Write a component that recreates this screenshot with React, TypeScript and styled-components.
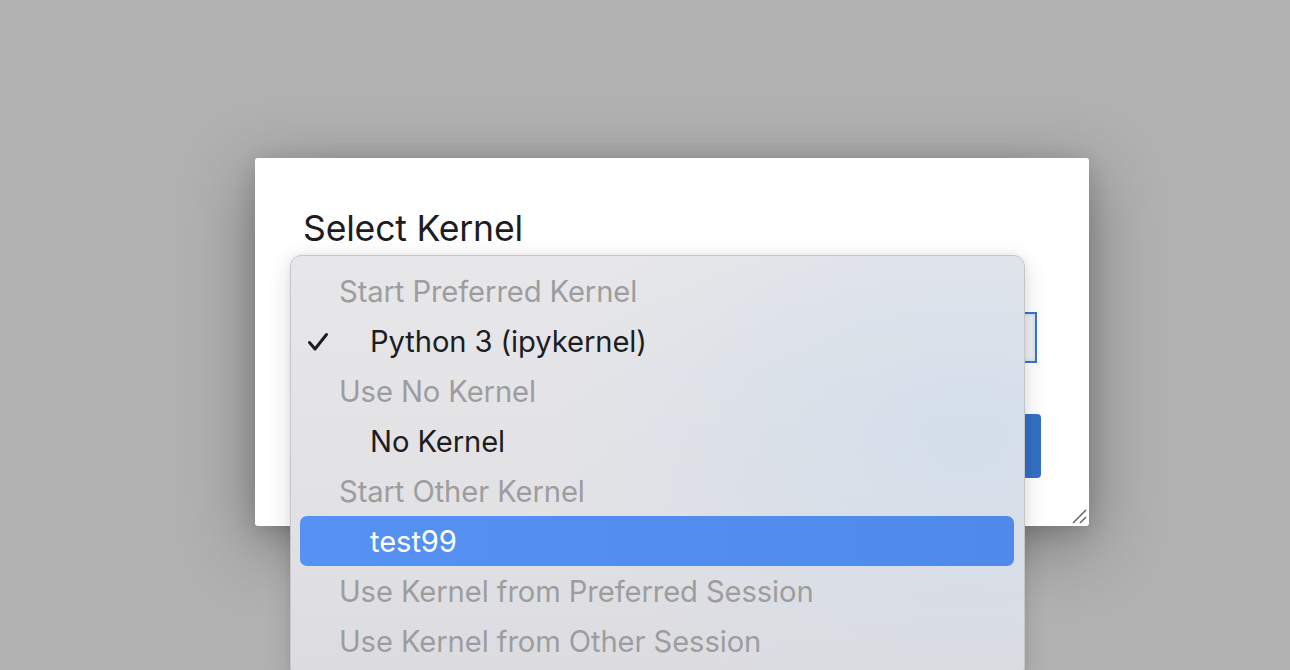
import React from "react";
import styled, { createGlobalStyle } from "styled-components";

const GlobalStyle = createGlobalStyle`
  html, body {
    margin: 0;
    padding: 0;
    height: 670px;
    overflow: hidden;
    background: #b1b1b1;
    font-family: Inter, "Liberation Sans", sans-serif;
  }
`;

const Page = styled.div`
  width: 1290px;
  height: 670px;
  box-sizing: border-box;
  padding: 158px 0 0 255px;
`;

const Dialog = styled.div`
  position: relative;
  width: 834px;
  height: 368px;
  box-sizing: border-box;
  padding: 46px 49px 0 48px;
  background: #ffffff;
  border-radius: 3px;
  box-shadow: 0 18px 70px rgba(0, 0, 0, 0.34), 0 4px 22px rgba(0, 0, 0, 0.14);
  display: flex;
  flex-direction: column;
`;

const Title = styled.h2`
  margin: 0;
  font-size: 35.6px;
  font-weight: 400;
  line-height: 50px;
  color: #1d1d1f;
  letter-spacing: -0.2px;
`;

const SelectBox = styled.div`
  margin-top: 58px;
  height: 51px;
  width: 734px;
  box-sizing: border-box;
  border: 2px solid #3a74c9;
  background: #eef2f7;
  box-shadow: inset 0 0 4px rgba(58, 116, 201, 0.25);
`;

const Actions = styled.div`
  display: flex;
  justify-content: flex-end;
  margin-top: 51px;
  margin-right: -1px;
`;

const PrimaryButton = styled.button`
  height: 64px;
  width: 140px;
  border: none;
  border-radius: 4px;
  background: #3370c4;
  color: #fff;
  font-family: inherit;
  font-size: 26px;
`;

const ResizeGrip = styled.svg`
  position: absolute;
  right: 2px;
  bottom: 2px;
`;

const Menu = styled.div`
  position: absolute;
  left: 35px;
  top: 97px;
  width: 735px;
  box-sizing: border-box;
  padding: 10px 10px 11px 9px;
  border: 1px solid #c6c6c8;
  border-radius: 11px;
  background:
    radial-gradient(ellipse 420px 300px at 92% 42%, rgba(198, 218, 238, 0.55), rgba(198, 218, 238, 0) 100%),
    linear-gradient(180deg, #e7e7e9 0%, #e2e2e5 60%, #dcdce0 100%);
  box-shadow: 0 6px 24px rgba(0, 0, 0, 0.14), 0 0 6px rgba(0, 0, 0, 0.06);
  display: flex;
  flex-direction: column;
`;

const Row = styled.div<{ $kind: "group" | "item"; $active?: boolean }>`
  position: relative;
  height: 50px;
  display: flex;
  align-items: center;
  padding-left: ${(p) => (p.$kind === "group" ? "39px" : "70px")};
  border-radius: 7px;
  font-size: 29.2px;
  letter-spacing: -0.1px;
  color: ${(p) => (p.$active ? "#ffffff" : p.$kind === "group" ? "#9d9d9f" : "#1d1d1f")};
  background: ${(p) => (p.$active ? "linear-gradient(90deg, #5592f3, #4f8aeb)" : "transparent")};
  white-space: nowrap;
`;

const Check = styled.svg`
  position: absolute;
  left: 7px;
  top: 16px;
`;

type Entry = { label: string; kind: "group" | "item"; checked?: boolean; active?: boolean };

const entries: Entry[] = [
  { label: "Start Preferred Kernel", kind: "group" },
  { label: "Python 3 (ipykernel)", kind: "item", checked: true },
  { label: "Use No Kernel", kind: "group" },
  { label: "No Kernel", kind: "item" },
  { label: "Start Other Kernel", kind: "group" },
  { label: "test99", kind: "item", active: true },
  { label: "Use Kernel from Preferred Session", kind: "group" },
  { label: "Use Kernel from Other Session", kind: "group" },
];

export default function App() {
  return (
    <>
      <GlobalStyle />
      <Page>
        <Dialog>
          <Title>Select Kernel</Title>
          <SelectBox />
          <Actions>
            <PrimaryButton>Select</PrimaryButton>
          </Actions>
          <ResizeGrip width="16" height="16" viewBox="0 0 16 16">
            <path d="M2 15 L15 2 M9 15 L15 9" stroke="#6b6b6b" strokeWidth="1.6" fill="none" />
          </ResizeGrip>
          <Menu>
            {entries.map((e) => (
              <Row key={e.label} $kind={e.kind} $active={e.active}>
                {e.checked && (
                  <Check width="22" height="20" viewBox="0 0 22 20">
                    <path
                      d="M2.5 10.5 L8 17 L19.5 2.5"
                      stroke="#1d1d1f"
                      strokeWidth="3"
                      fill="none"
                      strokeLinecap="round"
                      strokeLinejoin="round"
                    />
                  </Check>
                )}
                {e.label}
              </Row>
            ))}
          </Menu>
        </Dialog>
      </Page>
    </>
  );
}
